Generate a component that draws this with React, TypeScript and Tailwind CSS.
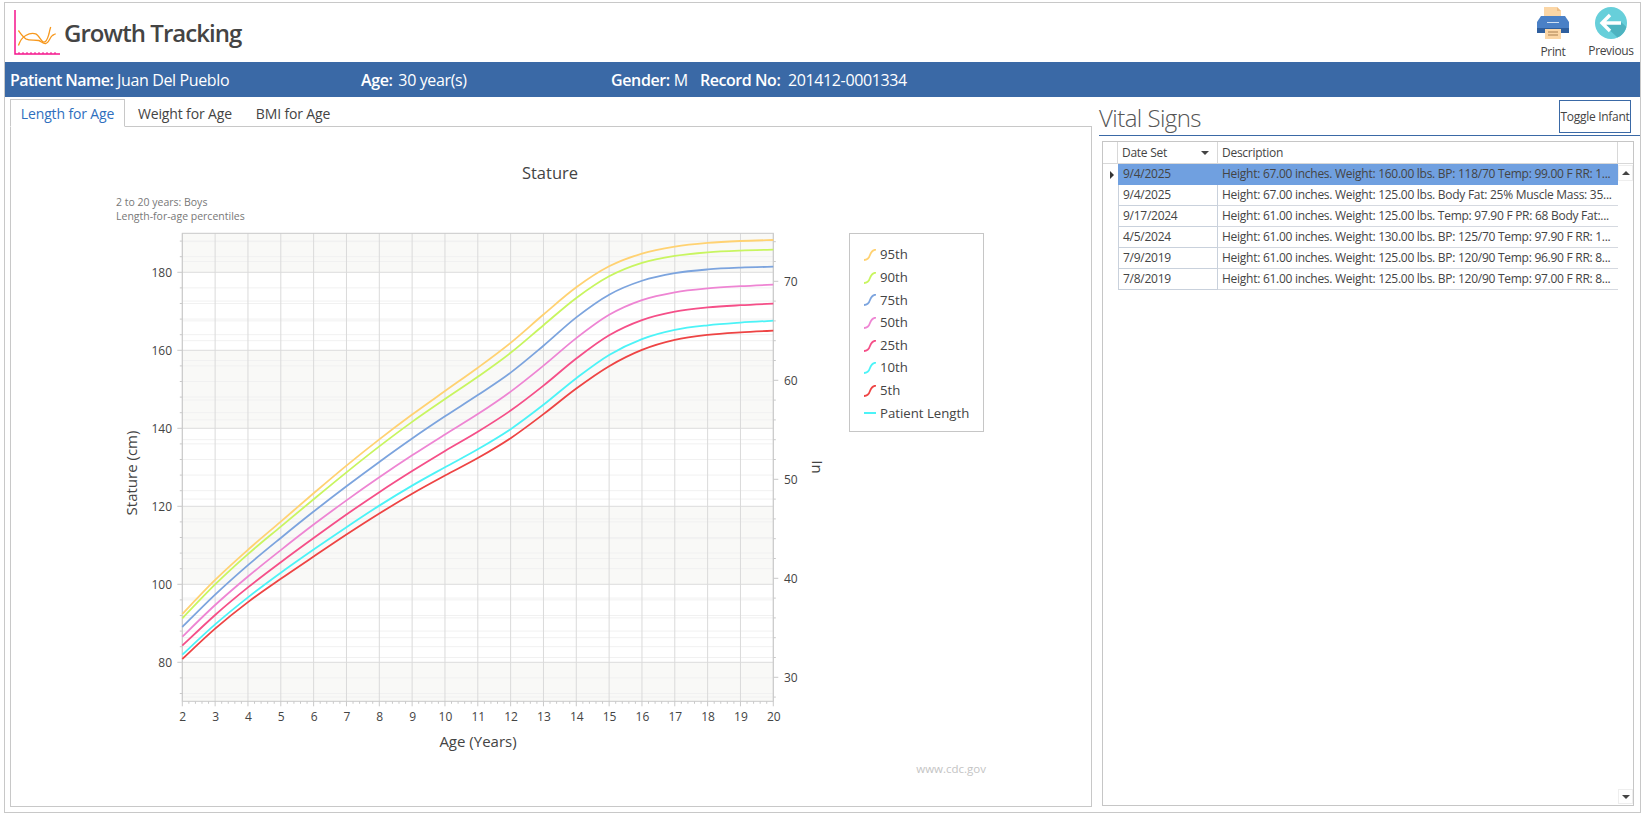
import React from "react";

const YEARS = Array.from({ length: 19 }, (_, i) => i + 2);
const xOf = (a: number) => 182.3 + (a - 2) * 32.833;
const cmY = (c: number) => 272.3 + (180 - c) * 3.9;
const inY = (i: number) => 281.3 + (70 - i) * 9.9;

const SERIES: { name: string; color: string; ys: number[] }[] = [
  { name: "95th", color: "#ffd272", ys: [614, 577.7, 549.3, 522, 493, 465, 439, 414, 391, 368, 345, 314, 285, 263, 251.7, 245.7, 242.3, 240.7, 240] },
  { name: "90th", color: "#c8f560", ys: [618.3, 582.7, 553, 527, 499, 472, 446, 421, 399, 377, 355, 325, 296, 273, 260.7, 255, 251.7, 250.3, 249.7] },
  { name: "75th", color: "#7ca4de", ys: [627, 593.3, 564.3, 538, 511, 486, 461.7, 438, 416, 395, 375, 346.7, 315, 291, 279, 271.7, 269, 267.3, 266.7] },
  { name: "50th", color: "#ee85d3", ys: [636.7, 603.3, 576, 550, 524, 500, 477, 455, 434, 415, 393, 366.7, 336.7, 311, 298, 291, 288, 286, 284.7] },
  { name: "25th", color: "#f54f88", ys: [645.7, 613.3, 586.7, 562, 538, 514, 491.7, 471, 450, 432.7, 412, 387, 357, 331.7, 318, 310, 307, 305, 303.7] },
  { name: "10th", color: "#4cf3f7", ys: [654.7, 622.7, 596.7, 572.3, 549.3, 527, 505, 485, 467, 450, 431, 406, 377, 351.7, 337, 328, 325, 322.3, 320.7] },
  { name: "5th", color: "#ee4444", ys: [659, 626.7, 601, 578.7, 556.7, 534, 513.3, 493, 475, 459, 440, 415, 387, 364, 347.7, 338, 334.3, 332, 330.7] },
];

function soften(ys: number[]) {
  return ys.map((y, i) => (i === 0 || i === ys.length - 1 ? y : (ys[i - 1] + 4 * y + ys[i + 1]) / 6));
}

function smooth(raw: number[]) {
  const ys = soften(soften(raw));
  const p = ys.map((y, i) => [xOf(i + 2), y]);
  let d = `M${p[0][0]} ${p[0][1]}`;
  for (let i = 0; i < p.length - 1; i++) {
    const a = p[Math.max(0, i - 1)], b = p[i], c = p[i + 1], e = p[Math.min(p.length - 1, i + 2)];
    d += ` C${b[0] + (c[0] - a[0]) / 6} ${b[1] + (c[1] - a[1]) / 6} ${c[0] - (e[0] - b[0]) / 6} ${c[1] - (e[1] - b[1]) / 6} ${c[0]} ${c[1]}`;
  }
  return d;
}

const PLOT = { l: 182.3, r: 773.3, t: 233.3, b: 701.3 };

function Chart() {
  const bands = [[PLOT.t, cmY(180)], [cmY(160), cmY(140)], [cmY(120), cmY(100)], [cmY(80), PLOT.b]];
  const cmMinor: number[] = [];
  for (let c = 72; c <= 188; c += 4) if (c % 20 !== 0) cmMinor.push(c);
  const inMinor: number[] = [];
  for (let i = 28; i <= 74; i += 2) inMinor.push(i);
  const yMinor: number[] = [];
  for (let k = 0; k <= 90; k++) if (k % 5 !== 0) yMinor.push(2 + k / 5);
  return (
    <svg width="720" height="532" viewBox="120 228 720 532" className="shrink-0 block">
      {bands.map(([a, b], i) => <rect key={i} x={PLOT.l} y={a} width={PLOT.r - PLOT.l} height={b - a} fill="#f9f9f7" />)}
      {cmMinor.map((c) => <line key={c} x1={PLOT.l} x2={PLOT.r} y1={cmY(c)} y2={cmY(c)} stroke="#f1f1f1" />)}
      {inMinor.filter((i) => i % 10 !== 0).map((i) => <line key={i} x1={PLOT.l} x2={PLOT.r} y1={inY(i)} y2={inY(i)} stroke="#f1f1f1" />)}
      {[80, 100, 120, 140, 160, 180].map((c) => <line key={c} x1={PLOT.l} x2={PLOT.r} y1={cmY(c)} y2={cmY(c)} stroke="#dcdcdc" />)}
      {YEARS.map((a) => <line key={a} x1={xOf(a)} x2={xOf(a)} y1={PLOT.t} y2={PLOT.b} stroke="#dadada" />)}
      <rect x={PLOT.l} y={PLOT.t} width={PLOT.r - PLOT.l} height={PLOT.b - PLOT.t} fill="none" stroke="#c9c9c9" />
      {cmMinor.map((c) => <line key={c} x1={PLOT.l - 2.5} x2={PLOT.l} y1={cmY(c)} y2={cmY(c)} stroke="#c9c9c9" />)}
      {[80, 100, 120, 140, 160, 180].map((c) => (
        <g key={c}>
          <line x1={PLOT.l - 5} x2={PLOT.l} y1={cmY(c)} y2={cmY(c)} stroke="#c9c9c9" />
          <text x="172" y={cmY(c) + 4.5} textAnchor="end" className="text-[12px] fill-[#444]">{c}</text>
        </g>
      ))}
      {inMinor.map((i) => <line key={i} x1={PLOT.r} x2={PLOT.r + (i % 10 === 0 ? 5 : 2.5)} y1={inY(i)} y2={inY(i)} stroke="#c9c9c9" />)}
      {[30, 40, 50, 60, 70].map((i) => <text key={i} x="784" y={inY(i) + 4.5} className="text-[12px] fill-[#444]">{i}</text>)}
      {yMinor.map((a) => <line key={a} x1={xOf(a)} x2={xOf(a)} y1={PLOT.b} y2={PLOT.b + 2.5} stroke="#c9c9c9" />)}
      {YEARS.map((a) => (
        <g key={a}>
          <line x1={xOf(a)} x2={xOf(a)} y1={PLOT.b} y2={PLOT.b + 5} stroke="#c9c9c9" />
          <text x={xOf(a) + 0.5} y="721" textAnchor="middle" className="text-[12px] fill-[#444]">{a}</text>
        </g>
      ))}
      {SERIES.map((s) => <path key={s.name} d={smooth(s.ys)} fill="none" stroke={s.color} strokeWidth="1.8" />)}
      <text transform="translate(137 473) rotate(-90)" textAnchor="middle" className="text-[15px] fill-[#444]">Stature (cm)</text>
      <text x="478" y="747" textAnchor="middle" className="text-[15px] fill-[#444]">Age (Years)</text>
      <text transform="translate(812 467) rotate(90)" textAnchor="middle" className="text-[15px] fill-[#444]">In</text>
    </svg>
  );
}

function Legend() {
  return (
    <div className="mt-[5px] ml-[9px] w-[135px] h-[199px] border border-[#c6c6c6] pt-[10px] pl-[14px] flex flex-col">
      {SERIES.map((s) => (
        <div key={s.name} className="h-[22.6px] flex items-center gap-[4px] text-[13.2px] text-[#444]">
          <svg width="12" height="12" viewBox="0 0 12 12" className="shrink-0">
            <path d="M0 11 C4 11 5 9 6 6 S9 1 12 0.5" fill="none" stroke={s.color} strokeWidth="1.8" />
          </svg>
          <span>{s.name}</span>
        </div>
      ))}
      <div className="h-[22.6px] flex items-center gap-[4px] text-[13.2px] text-[#444]">
        <div className="w-[12px] h-[2px] bg-[#4cf3f7] shrink-0" />
        <span>Patient Length</span>
      </div>
    </div>
  );
}

function Logo() {
  return (
    <svg width="46" height="46" viewBox="0 0 46 46" className="shrink-0">
      <path d="M1 0V44H46" fill="none" stroke="#f5148c" strokeWidth="1.5" />
      <path d="M5 44V42M9 44V42M13 44V42M17 44V42M21 44V42M25 44V42M29 44V42M33 44V42M37 44V42M41 44V42" stroke="#f5148c" strokeWidth="1" />
      <path d="M4.4 20.5C7 24 9 27 11.7 28.8C16 31 20 29.5 24.7 30.5C27 31 29 34 31.7 33.5C35 33 36 27 38.4 25.5C39.5 24.8 40.5 24 41.7 23.8" fill="none" stroke="#f7981d" strokeWidth="1.3" />
      <path d="M4.4 35.5C6 31 8 27.5 11.7 25.5C15 23.5 19 23 21.7 23.8C25 25 27 32 30 32.2C33 32 34 27 35 23.8C35.5 21.5 36 19 36.7 17" fill="none" stroke="#f7981d" strokeWidth="1.3" />
    </svg>
  );
}

function PrintIcon() {
  return (
    <svg width="34" height="34" viewBox="0 0 34 34" className="shrink-0">
      <path d="M8 0H21L25 4V12H8Z" fill="#fbd6a6" />
      <path d="M21 0L25 4H21Z" fill="#eebd85" />
      <path d="M5 9H29L33 15V26H1V15Z" fill="#4a80c6" />
      <path d="M1 21H33V26H1Z" fill="#2f5f9e" />
      <rect x="11" y="15" width="12" height="1" fill="#cfe0f4" />
      <path d="M9 22H25V32H9Z" fill="#fbd6a6" />
      <path d="M12 25H22M12 28H22" stroke="#a87f50" strokeWidth="1" />
    </svg>
  );
}

function BackIcon() {
  return (
    <svg width="32" height="32" viewBox="0 0 32 32" className="shrink-0">
      <circle cx="16" cy="16" r="16" fill="#67cfda" />
      <path d="M9 18L22.5 30.6A16 16 0 0 0 31.4 20L26 15H12Z" fill="#4db3c0" />
      <path d="M15 8L7 16L15 24M8 16H26" fill="none" stroke="#fff" strokeWidth="3.4" />
    </svg>
  );
}

const ROWS = [
  ["9/4/2025", "Height: 67.00 inches. Weight: 160.00 lbs. BP: 118/70 Temp: 99.00 F RR: 1..."],
  ["9/4/2025", "Height: 67.00 inches. Weight: 125.00 lbs. Body Fat: 25% Muscle Mass: 35..."],
  ["9/17/2024", "Height: 61.00 inches. Weight: 125.00 lbs. Temp: 97.90 F PR: 68 Body Fat:..."],
  ["4/5/2024", "Height: 61.00 inches. Weight: 130.00 lbs. BP: 125/70 Temp: 97.90 F RR: 1..."],
  ["7/9/2019", "Height: 61.00 inches. Weight: 125.00 lbs. BP: 120/90 Temp: 96.90 F RR: 8..."],
  ["7/8/2019", "Height: 61.00 inches. Weight: 125.00 lbs. BP: 120/90 Temp: 97.00 F RR: 8..."],
];

function Grid() {
  return (
    <div className="mt-[5px] ml-[3px] mr-[6px] mb-[6px] flex-1 border border-[#c6c6c6] flex flex-col text-[12px] text-[#444] tracking-[-0.27px]">
      <div className="h-[22px] grid grid-cols-[15px_100px_400px_1fr] border-b border-[#d8d8d8] shrink-0">
        <div className="border-r border-[#d8d8d8]" />
        <div className="border-r border-[#d8d8d8] pl-[4px] pr-[8px] flex items-center justify-between">
          <span>Date Set</span>
          <span className="w-0 h-0 border-x-[4px] border-x-transparent border-t-[4px] border-t-[#444]" />
        </div>
        <div className="border-r border-[#d8d8d8] pl-[4px] flex items-center">Description</div>
        <div />
      </div>
      <div className="flex-1 flex">
        <div className="w-[515px] shrink-0">
          {ROWS.map(([date, desc], i) => (
            <div key={i} className="h-[21px] grid grid-cols-[15px_100px_400px]">
              <div className="flex items-center justify-center pl-[2px]">
                {i === 0 && <span className="w-0 h-0 border-y-[4px] border-y-transparent border-l-[4px] border-l-[#333]" />}
              </div>
              <div className={`pl-[4px] flex items-center border-l border-r border-b ${i === 0 ? "bg-[#70a0e0] border-[#70a0e0]" : "border-[#c9d1dc]"}`}>{date}</div>
              <div className={`pl-[4px] flex items-center whitespace-nowrap overflow-hidden border-b ${i === 0 ? "bg-[#70a0e0] border-[#70a0e0]" : "border-[#d5d9e0]"}`}>{desc}</div>
            </div>
          ))}
        </div>
        <div className="flex-1 flex flex-col justify-between items-center pt-[1px] pb-[1px]">
          <div className="w-[15px] h-[16px] border border-[#eeeeee] flex items-center justify-center">
            <span className="w-0 h-0 border-x-[4px] border-x-transparent border-b-[4px] border-b-[#444]" />
          </div>
          <div className="w-[15px] h-[15px] border border-[#eeeeee] flex items-center justify-center">
            <span className="w-0 h-0 border-x-[4px] border-x-transparent border-t-[4px] border-t-[#444]" />
          </div>
        </div>
      </div>
    </div>
  );
}

export default function App() {
  return (
    <div className="w-[1643px] h-[817px] bg-white overflow-hidden pl-[4px] pt-[2px] font-['Open_Sans','Liberation_Sans',sans-serif]">
      <div className="w-[1637px] h-[811px] border border-[#c8c8c8] flex flex-col">
        <header className="h-[59px] shrink-0 flex items-center pl-[9px] pr-[7px]">
          <Logo />
          <h1 className="ml-[4px] text-[24px] font-semibold text-[#444] tracking-[-0.95px]">Growth Tracking</h1>
          <div className="ml-auto flex gap-[19px] self-start pt-[4px]">
            <div className="w-[34px] flex flex-col items-center">
              <PrintIcon />
              <span className="text-[12px] text-[#444] mt-[2px] tracking-[-0.35px]">Print</span>
            </div>
            <div className="w-[44px] flex flex-col items-center">
              <BackIcon />
              <span className="text-[12px] text-[#444] mt-[3px] tracking-[-0.35px] whitespace-nowrap">Previous</span>
            </div>
          </div>
        </header>
        <div className="h-[35px] shrink-0 bg-[#3a69a6] text-white text-[16px] flex items-center pl-[5px] pt-[1px] tracking-[-0.37px]">
          <div className="w-[351px]"><b className="font-semibold tracking-[-0.55px]">Patient Name:</b> Juan Del Pueblo</div>
          <div className="w-[250px]"><b className="font-semibold">Age:</b><span className="ml-[2px]"> 30 year(s)</span></div>
          <div className="w-[89px]"><b className="font-semibold">Gender:</b> M</div>
          <div className="whitespace-nowrap"><b className="font-semibold tracking-[-0.45px]">Record No:</b>&nbsp; 201412-0001334</div>
        </div>
        <main className="flex-1 flex min-h-0">
          <section className="w-[1087px] shrink-0 pl-[5px] pt-[2px] pb-[5px] flex flex-col">
            <div className="flex h-[28px] shrink-0 text-[14px] text-[#444] tracking-[-0.15px] relative z-10">
              <div className="w-[115px] border border-[#c8c8c8] border-b-white bg-white flex items-center justify-center pt-[1px] text-[#2f6fbe]">Length for Age</div>
              <div className="ml-[13px] flex items-center pt-[1px]">Weight for Age</div>
              <div className="ml-[24px] flex items-center pt-[1px]">BMI for Age</div>
            </div>
            <div className="flex-1 mt-[-1px] border border-[#c8c8c8] flex flex-col">
              <div className="mt-[34px] h-[24px] pr-[2px] text-center text-[16.5px] leading-[24px] text-[#444]">Stature</div>
              <div className="mt-[10px] pl-[105px] text-[10.5px] leading-[14px] text-[#777]">
                <div>2 to 20 years: Boys</div>
                <div>Length-for-age percentiles</div>
              </div>
              <div className="mt-[5px] pl-[109px] flex items-start">
                <Chart />
                <Legend />
              </div>
              <div className="pr-[105px] text-right text-[11.5px] text-[#c4c4c4]">www.cdc.gov</div>
            </div>
          </section>
          <section className="flex-1 ml-[7px] flex flex-col min-w-0">
            <div className="h-[39px] shrink-0 border-b border-[#3a69a6] flex items-start justify-between">
              <div className="text-[24px] font-light text-[#555] mt-[5px] leading-[32px] tracking-[-0.55px]">Vital Signs</div>
              <div className="mt-[3px] mr-[9px] w-[72px] h-[33px] border border-[#3a69a6] flex items-center justify-center text-[12px] text-[#444] tracking-[-0.3px] whitespace-nowrap">Toggle Infant</div>
            </div>
            <Grid />
          </section>
        </main>
      </div>
    </div>
  );
}
